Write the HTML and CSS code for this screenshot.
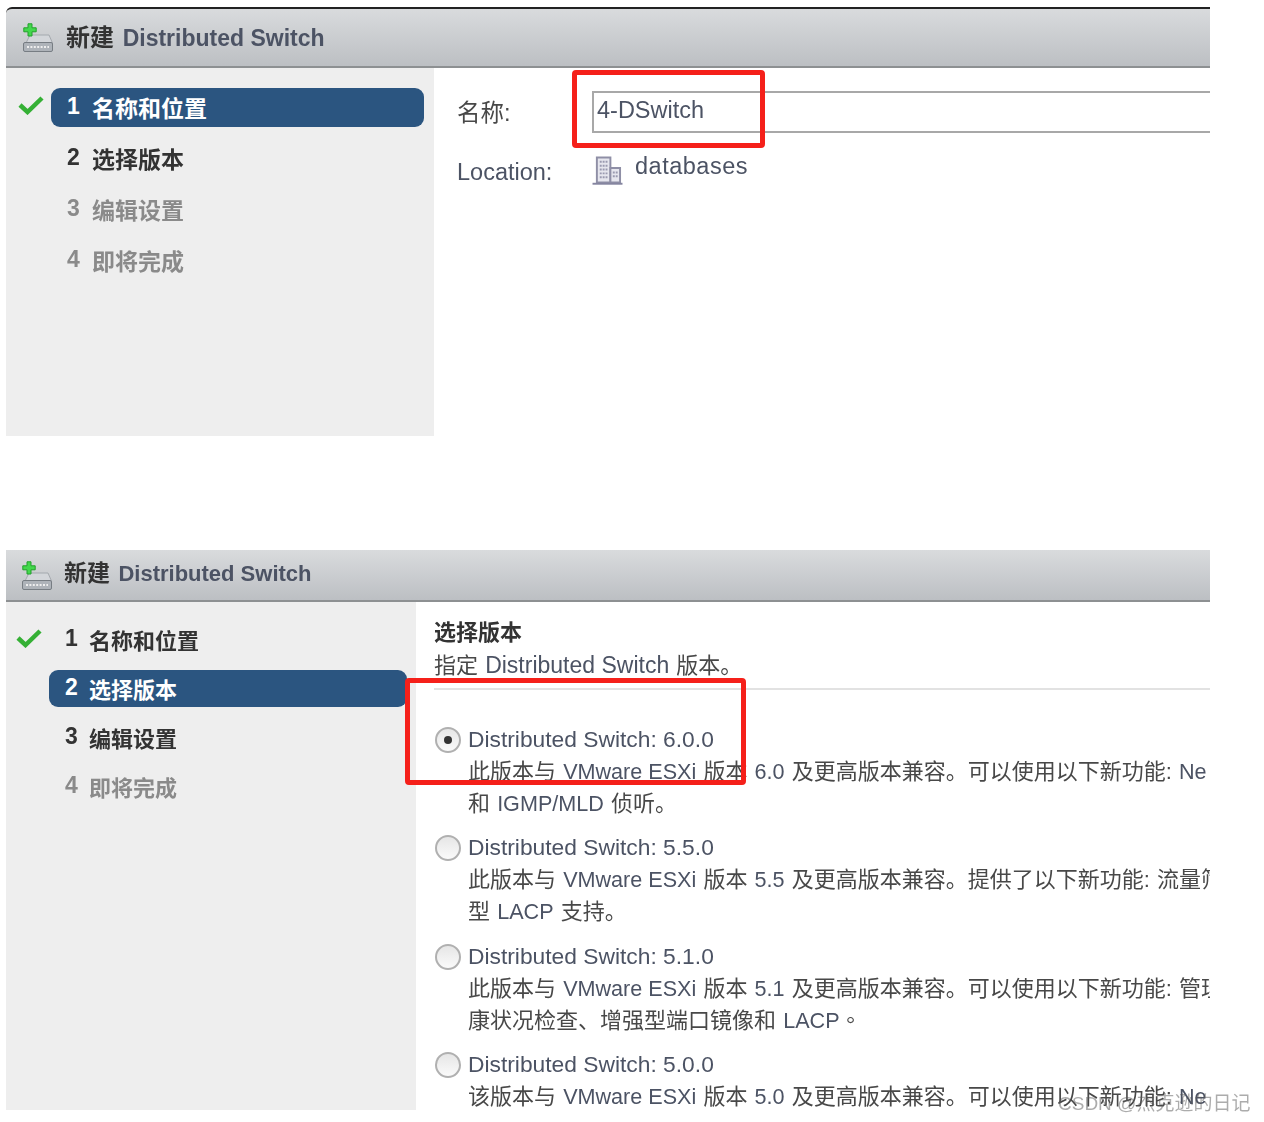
FILE: index.html
```html
<!DOCTYPE html>
<html lang="zh-CN">
<head>
<meta charset="utf-8">
<title>新建 Distributed Switch</title>
<link rel="stylesheet" href="styles.css">
</head>
<body>
<div class="panel panel-name">
  <div class="head">
    <svg class="head-icon" viewBox="0 0 30 29"><path d="M3 20 L7 12 H26 L29.5 20Z" fill="#d3d6da" stroke="#a4a9ae"/><rect x=".5" y="19.5" width="29" height="9" rx="1.5" fill="#aeb3b9" stroke="#777d83"/><path d="M4 24h22" stroke="#eee" stroke-width="2" stroke-dasharray="2 1.4"/><path d="M5 .8h4v4h4.2v4H9v4.2H5V8.800H.8v-4H5z" fill="#43d84c" stroke="#23a02c"/></svg>
    <span class="head-title"><b>新建</b> <span>Distributed Switch</span></span>
  </div>
  <div class="body">
    <div class="side">
      <div class="step active"><svg class="check" viewBox="0 0 26 20"><path d="M2 10 L9.500 17 L24 3" fill="none" stroke="#35b035" stroke-width="4.500"/></svg><i>1</i><span>名称和位置</span></div>
      <div class="step"><i>2</i><span>选择版本</span></div>
      <div class="step off"><i>3</i><span>编辑设置</span></div>
      <div class="step off"><i>4</i><span>即将完成</span></div>
    </div>
    <div class="name-form">
      <div class="form-row"><label class="name-label">名称:</label><div class="name-input">4-DSwitch</div></div>
      <div class="form-row loc-row"><label class="en">Location:</label>
        <svg class="dc-icon" viewBox="0 0 31 30"><path d="M4.500 1.500h14v26h-14z" fill="#e6e6ee" stroke="#8f8fa6" stroke-width="2"/><path d="M18.500 12.500h10v15h-10z" fill="#e6e6ee" stroke="#8f8fa6" stroke-width="2"/><path d="M7.500 6h8M7.500 10h8M7.500 14h8M7.500 18h8M7.500 22h8M21 17h5M21 21h5" stroke="#9a9ab0" stroke-width="2" stroke-dasharray="2 1"/><path d="M0 28.700h31" stroke="#8585a0" stroke-width="2"/></svg>
        <span class="loc-val en">databases</span>
      </div>
    </div>
  </div>
  <div class="mark mark-name"></div>
</div>

<div class="panel panel-version">
  <div class="head">
    <svg class="head-icon" viewBox="0 0 30 29"><path d="M3 20 L7 12 H26 L29.5 20Z" fill="#d3d6da" stroke="#a4a9ae"/><rect x=".5" y="19.5" width="29" height="9" rx="1.5" fill="#aeb3b9" stroke="#777d83"/><path d="M4 24h22" stroke="#eee" stroke-width="2" stroke-dasharray="2 1.4"/><path d="M5 .8h4v4h4.2v4H9v4.2H5V8.800H.8v-4H5z" fill="#43d84c" stroke="#23a02c"/></svg>
    <span class="head-title"><b>新建</b> <span>Distributed Switch</span></span>
  </div>
  <div class="body">
    <div class="side">
      <div class="step"><svg class="check" viewBox="0 0 26 20"><path d="M2 10 L9.500 17 L24 3" fill="none" stroke="#35b035" stroke-width="4.500"/></svg><i>1</i><span>名称和位置</span></div>
      <div class="step active"><i>2</i><span>选择版本</span></div>
      <div class="step"><i>3</i><span>编辑设置</span></div>
      <div class="step off"><i>4</i><span>即将完成</span></div>
    </div>
    <div class="versions">
      <div class="v-title">选择版本</div>
      <div class="v-sub">指定 <span class="en">Distributed Switch</span> 版本。</div>
      <div class="v-list">
        <div class="v-item">
          <span class="radio on"></span>
          <div class="v-text"><div class="v-name en">Distributed Switch: 6.0.0</div><div>此版本与 <span class="en">VMware ESXi</span> 版本 <span class="en">6.0</span> 及更高版本兼容。可以使用以下新功能: <span class="en">Ne</span></div><div>和 <span class="en">IGMP/MLD</span> 侦听。</div></div>
        </div>
        <div class="v-item">
          <span class="radio"></span>
          <div class="v-text"><div class="v-name en">Distributed Switch: 5.5.0</div><div>此版本与 <span class="en">VMware ESXi</span> 版本 <span class="en">5.5</span> 及更高版本兼容。提供了以下新功能: 流量筛</div><div>型 <span class="en">LACP</span> 支持。</div></div>
        </div>
        <div class="v-item">
          <span class="radio"></span>
          <div class="v-text"><div class="v-name en">Distributed Switch: 5.1.0</div><div>此版本与 <span class="en">VMware ESXi</span> 版本 <span class="en">5.1</span> 及更高版本兼容。可以使用以下新功能: 管理</div><div>康状况检查、增强型端口镜像和 <span class="en">LACP</span>。</div></div>
        </div>
        <div class="v-item">
          <span class="radio"></span>
          <div class="v-text"><div class="v-name en">Distributed Switch: 5.0.0</div><div>该版本与 <span class="en">VMware ESXi</span> 版本 <span class="en">5.0</span> 及更高版本兼容。可以使用以下新功能: <span class="en">Ne</span></div></div>
        </div>
      </div>
    </div>
  </div>
  <div class="mark mark-version"></div>
</div>
<div class="watermark">CSDN @杰克逊的日记</div>
</body>
</html>
```

FILE: styles.css
```css
html, body {
  margin: 0;
  padding: 0;
  background: #fff;
}

body {
  position: relative;
  height: 1122px;
  overflow: hidden;
  padding-top: 7px;
  box-sizing: border-box;
  font-family: "Liberation Sans", "Noto Sans CJK SC", sans-serif;
  color: #484848;
}

.en {
  color: #4c5364;
  word-spacing: 0;
}

.panel {
  position: relative;
  width: 1204px;
  margin-left: 6px;
  overflow: hidden;
  filter: blur(.45px);
}

.panel-name {
  height: 429px;
}

.panel-version {
  height: 560px;
  margin-top: 114px;
}

.head {
  display: flex;
  align-items: center;
  box-sizing: border-box;
  height: 61px;
  padding-left: 17px;
  background: linear-gradient(#d9dbdd, #bcbfc3);
  border-top: 2px solid #222;
  border-bottom: 2px solid #8d9092;
  border-top-left-radius: 6px;
}

.panel-version .head {
  height: 52px;
  padding-left: 16px;
  border-top: 0;
  border-top-left-radius: 0;
}

.head-icon {
  width: 30px;
  height: 29px;
  margin-right: 13px;
}

.panel-version .head-icon {
  margin-right: 12px;
}

.head-title {
  margin-top: -5px;
  font-size: 24px;
  white-space: nowrap;
}

.panel-version .head-title {
  margin-top: -8px;
  font-size: 23px;
}

.head-title b {
  margin-right: 2px;
  color: #333;
}

.head-title span {
  font-size: 23px;
  font-weight: 700;
  color: #4c5364;
}

.panel-version .head-title span {
  font-size: 22px;
}

.body {
  display: flex;
  height: 100%;
}

.side {
  flex: none;
  box-sizing: border-box;
  width: 428px;
  height: 368px;
  padding: 20px 10px 0 45px;
  background: #eeeeee;
}

.panel-version .side {
  width: 410px;
  height: 508px;
  padding: 19px 9px 0 43px;
}

.step {
  position: relative;
  display: flex;
  align-items: center;
  gap: 13px;
  height: 39px;
  margin-bottom: 12px;
  padding-left: 16px;
  border-radius: 9px;
  font-size: 23px;
  font-weight: 700;
  color: #333;
}

.panel-version .step {
  gap: 12px;
  height: 37px;
  font-size: 22px;
}

.step span {
  margin-top: -2px;
}

.step i {
  width: 12px;
  margin-top: -2px;
  font-style: normal;
  font-size: 23px;
}

.step.active {
  background: #2b5580;
  color: #fff;
}

.step.off {
  color: #8a8a8a;
}

.check {
  position: absolute;
  left: -33px;
  top: 7px;
  width: 26px;
  height: 20px;
}

.name-form {
  padding: 23px 0 0 23px;
}

.form-row {
  display: flex;
  align-items: center;
  font-size: 23.5px;
}

.form-row label {
  width: 135px;
  flex: none;
}

.form-row .name-label {
  margin-top: -3px;
}

.name-input {
  box-sizing: border-box;
  width: 640px;
  height: 42px;
  padding: 0 3px;
  border: 2px solid #a8a8a8;
  color: #4c5364;
  line-height: 35px;
  white-space: nowrap;
}

.loc-row {
  margin-top: 26px;
  align-items: flex-start;
}

.dc-icon {
  width: 31px;
  height: 29px;
  margin-top: -3px;
  margin-right: 12px;
}

.loc-val {
  margin-top: -6px;
  letter-spacing: .5px;
}

.versions {
  flex: 1;
  min-width: 0;
  padding: 14px 0 0 18px;
  font-family: "Liberation Sans", "Noto Sans CJK TC", sans-serif;
  font-size: 22px;
  word-spacing: 1px;
  white-space: nowrap;
}

.v-title {
  font-weight: 700;
  color: #333;
  line-height: 33px;
}

.v-sub {
  line-height: 33px;
  padding-bottom: 6px;
  border-bottom: 2px solid #e2e2e2;
}

.v-sub .en {
  font-size: 23px;
}

.v-list {
  padding-top: 33px;
}

.v-item {
  display: flex;
  gap: 7px;
  height: 108.4px;
}

.v-text {
  line-height: 32px;
}

.v-text .en {
  font-size: 21.6px;
}

.v-text .v-name {
  margin-bottom: 1px;
  font-size: 22.8px;
}

.radio {
  flex: none;
  box-sizing: border-box;
  position: relative;
  width: 26px;
  height: 26px;
  margin: 4px 0 0 1px;
  border: 2px solid #b0b0b0;
  border-radius: 50%;
  background: linear-gradient(#e6e6e6, #fafafa);
}

.radio.on::after {
  content: "";
  position: absolute;
  left: 7px;
  top: 7px;
  width: 8px;
  height: 8px;
  border-radius: 50%;
  background: #333;
}

.mark {
  position: absolute;
  box-sizing: border-box;
  border: 5px solid #f5201a;
  border-radius: 4px;
}

.mark-name {
  left: 566px;
  top: 63px;
  width: 193px;
  height: 78px;
}

.mark-version {
  left: 399px;
  top: 128px;
  width: 341px;
  height: 107px;
}

.watermark {
  position: absolute;
  left: 1058px;
  top: 1088px;
  font-size: 19px;
  color: rgba(90, 90, 90, .5);
  white-space: nowrap;
  filter: blur(.45px);
}
```
